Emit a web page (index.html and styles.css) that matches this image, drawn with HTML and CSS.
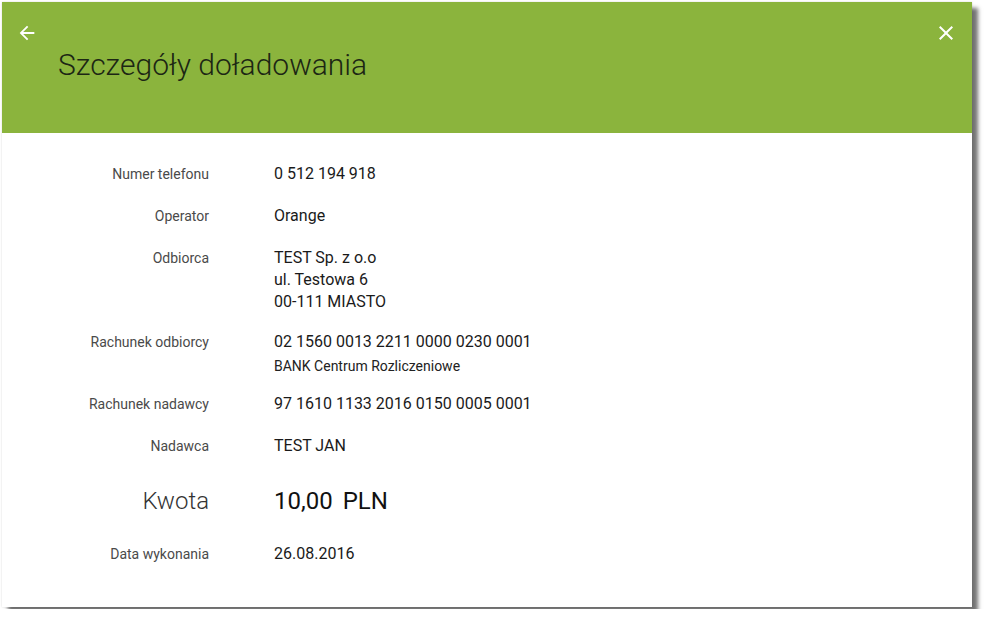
FILE: index.html
```html
<!DOCTYPE html>
<html lang="pl">
<head>
<meta charset="utf-8">
<title>Szczegóły doładowania</title>
<link rel="stylesheet" href="styles.css">
</head>
<body>
<div class="modal">
  <header class="modal-header">
    <div class="header-icons">
      <button class="icon-btn" aria-label="Wstecz">
        <svg width="22" height="22" viewBox="0 0 24 24"><path d="M20 11H7.83l5.59-5.59L12 4l-8 8 8 8 1.41-1.41L7.83 13H20v-2z" fill="#fff"/></svg>
      </button>
      <button class="icon-btn" aria-label="Zamknij">
        <svg width="24" height="24" viewBox="0 0 24 24"><path d="M19 6.41L17.59 5 12 10.59 6.41 5 5 6.41 10.59 12 5 17.59 6.41 19 12 13.41 17.59 19 19 17.59 13.41 12z" fill="#fff"/></svg>
      </button>
    </div>
    <h1 class="title">Szczegóły doładowania</h1>
  </header>
  <div class="modal-body">
    <div class="row">
      <div class="label">Numer telefonu</div>
      <div class="value">0 512 194 918</div>
    </div>
    <div class="row">
      <div class="label">Operator</div>
      <div class="value">Orange</div>
    </div>
    <div class="row">
      <div class="label">Odbiorca</div>
      <div class="value">TEST Sp. z o.o<br>ul. Testowa 6<br>00-111 MIASTO</div>
    </div>
    <div class="row row-tight">
      <div class="label">Rachunek odbiorcy</div>
      <div class="value">02 1560 0013 2211 0000 0230 0001<div class="sub">BANK Centrum Rozliczeniowe</div></div>
    </div>
    <div class="row">
      <div class="label">Rachunek nadawcy</div>
      <div class="value">97 1610 1133 2016 0150 0005 0001</div>
    </div>
    <div class="row">
      <div class="label">Nadawca</div>
      <div class="value">TEST JAN</div>
    </div>
    <div class="row row-amount">
      <div class="label">Kwota</div>
      <div class="value">10,00 <span class="currency">PLN</span></div>
    </div>
    <div class="row">
      <div class="label">Data wykonania</div>
      <div class="value">26.08.2016</div>
    </div>
  </div>
</div>
</body>
</html>
```
FILE: styles.css
```css
html, body {
  margin: 0;
  padding: 0;
  background: #fff;
}
body {
  font-family: Roboto, "Liberation Sans", Arial, sans-serif;
  padding: 2px;
}
.modal {
  width: 970px;
  height: 605px;
  background: #fff;
  box-shadow: 6px 6px 4px rgba(0, 0, 0, 0.55), 0 0 2px rgba(0, 0, 0, 0.15);
  display: flex;
  flex-direction: column;
}
.modal-header {
  background: #8bb43d;
  height: 131px;
  box-sizing: border-box;
  padding: 19px 14px 0 14px;
}
.header-icons {
  display: flex;
  justify-content: space-between;
  align-items: center;
  height: 24px;
}
.icon-btn {
  border: 0;
  background: none;
  padding: 0;
  margin: 0;
  display: flex;
  cursor: pointer;
}
.title {
  margin: 0 0 0 42px;
  font-size: 30px;
  font-weight: 300;
  line-height: 40px;
  color: #1c2614;
}
.modal-body {
  padding-top: 30px;
  display: flex;
  flex-direction: column;
  gap: 20px;
}
.row {
  display: grid;
  grid-template-columns: 207px 1fr;
  column-gap: 65px;
  align-items: baseline;
}
.label {
  text-align: right;
  font-size: 14px;
  line-height: 22px;
  color: #4a4a4a;
}
.value {
  font-size: 16px;
  line-height: 22px;
  color: #1a1a1a;
}
.sub {
  font-size: 14px;
  line-height: 20px;
  margin-top: 3px;
  color: #222;
}
.row-tight {
  margin-top: -2px;
  margin-bottom: -3px;
}
.row-amount {
  padding: 8px 0 6px;
}
.row-amount .label {
  font-size: 24px;
  line-height: 32px;
  font-weight: 300;
  color: #333;
}
.row-amount .value {
  font-size: 24px;
  line-height: 32px;
  font-weight: 400;
  color: #111;
}
.currency {
  margin-left: 4px;
}
```
